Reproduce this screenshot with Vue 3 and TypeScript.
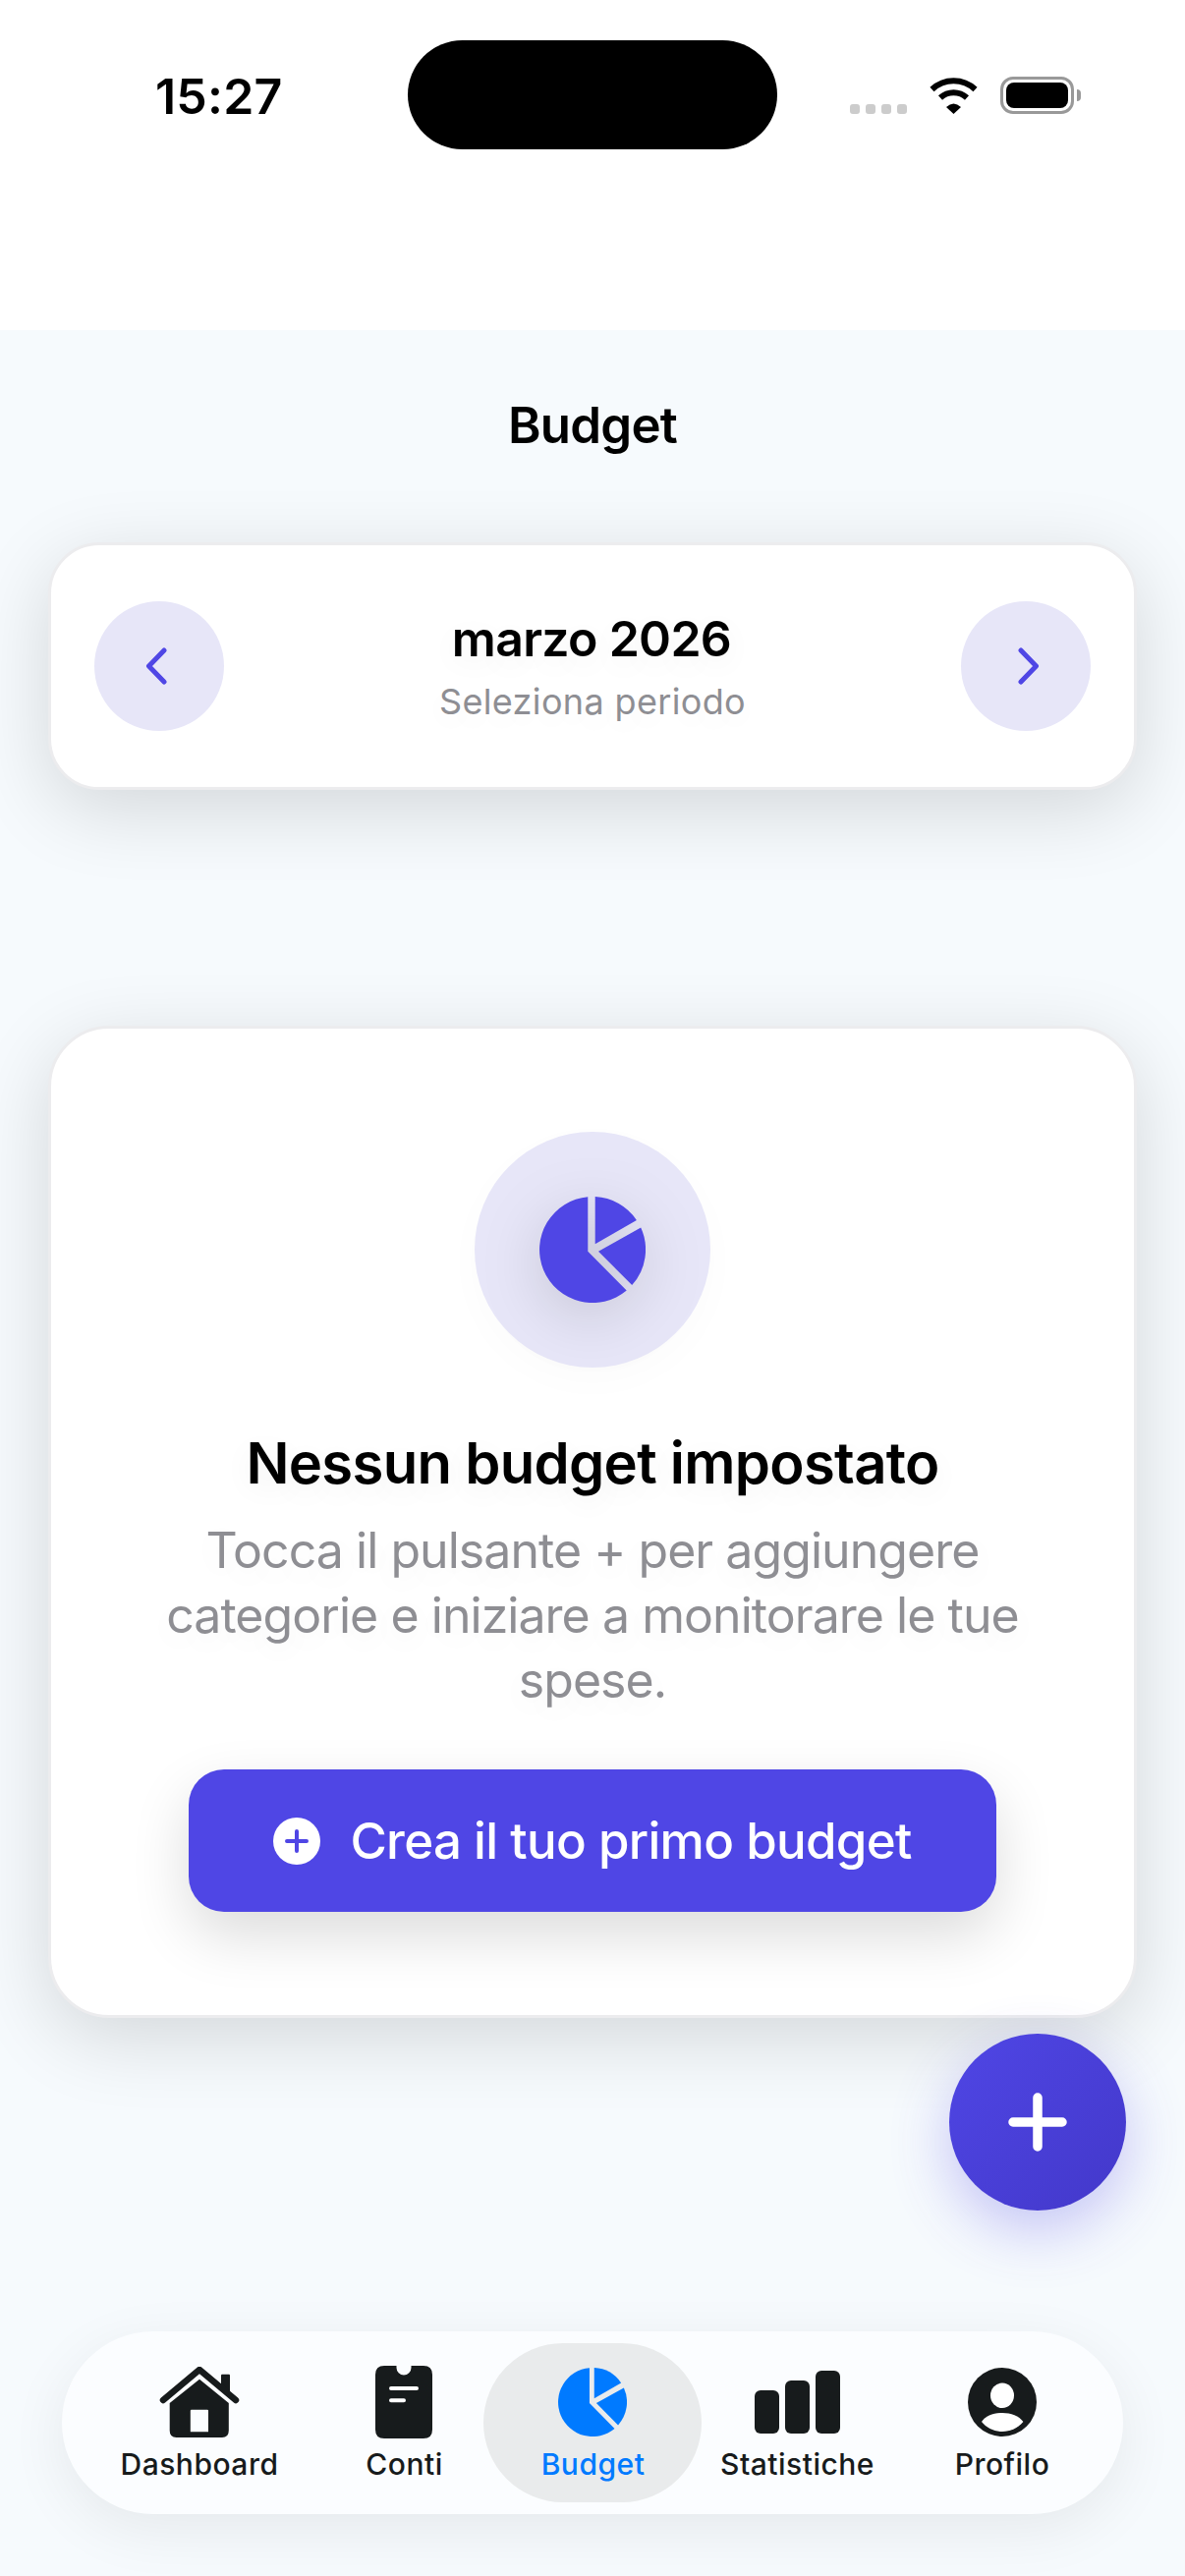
<script setup lang="ts">
const piePaths = [
  'M49.3 .3A54 54 0 1 0 88.7 95.5L49.3 55.7Z',
  'M56.7 .1A54 54 0 0 1 98.9 23.9L56.7 48.3Z',
  'M103.2 31.6A54 54 0 0 1 94.2 90.1L60 55.7Z'
]
</script>

<template>
  <div class="page">
    <header class="status-bar">
      <span class="time">15:27</span>
      <div class="island"></div>
      <div class="status-icons">
        <div class="dots"><i></i><i></i><i></i><i></i></div>
        <svg class="wifi" width="51" height="37" viewBox="0 0 51 37">
          <path d="M3.5 12A32 32 0 0 1 47.5 12" fill="none" stroke="#000" stroke-width="6" />
          <path d="M12 20.5A20 20 0 0 1 39 20.5" fill="none" stroke="#000" stroke-width="6" />
          <path d="M18 30Q25.5 23 33 30L25.5 37Z" fill="#000" />
        </svg>
        <div class="battery"><div class="battery-fill"></div></div>
      </div>
    </header>

    <h1 class="title">Budget</h1>

    <section class="card period-card">
      <button class="nav-btn">
        <svg width="30" height="38" viewBox="0 0 30 38">
          <path d="M20 3L4.5 19L20 35" fill="none" stroke="#4f46e5" stroke-width="5" stroke-linecap="round" stroke-linejoin="round" />
        </svg>
      </button>
      <div class="period">
        <div class="period-month">marzo 2026</div>
        <div class="period-sub">Seleziona periodo</div>
      </div>
      <button class="nav-btn">
        <svg width="30" height="38" viewBox="0 0 30 38">
          <path d="M10 3L25.5 19L10 35" fill="none" stroke="#4f46e5" stroke-width="5" stroke-linecap="round" stroke-linejoin="round" />
        </svg>
      </button>
    </section>

    <section class="card empty-card">
      <div class="empty-icon">
        <svg class="empty-pie" width="108" height="108" viewBox="0 0 108 108">
          <path v-for="d in piePaths" :key="d" :d="d" fill="#4f46e5" />
        </svg>
      </div>
      <h2 class="empty-title">Nessun budget impostato</h2>
      <p class="empty-text">Tocca il pulsante + per aggiungere categorie e iniziare a monitorare le tue spese.</p>
      <button class="create-btn">
        <svg width="48" height="48" viewBox="0 0 48 48">
          <circle cx="24" cy="24" r="24" fill="#fff" />
          <path d="M24 14V34M14 24H34" fill="none" stroke="#4f46e5" stroke-width="4" stroke-linecap="round" />
        </svg>
        <span>Crea il tuo primo budget</span>
      </button>
    </section>

    <button class="fab">
      <svg width="60" height="60" viewBox="0 0 60 60">
        <path d="M30 5V55M5 30H55" fill="none" stroke="#fff" stroke-width="9.5" stroke-linecap="round" />
      </svg>
    </button>

    <nav class="tabbar">
      <div class="tab">
        <div class="tab-icon">
          <svg width="82" height="72" viewBox="0 0 82 72">
            <path d="M63 8.5Q63 7.7 64 7.7H71Q72 7.7 72 8.5V26L63 18Z" fill="#171b1c" />
            <path d="M4 34L41 3L78 34" fill="none" stroke="#171b1c" stroke-width="6.5" stroke-linecap="round" stroke-linejoin="round" />
            <path fill-rule="evenodd" d="M10.7 37L41 12.7L70.8 37V65Q70.8 72 64 72H17.5Q10.7 72 10.7 65ZM31.8 44.7V66.3H50V44.7Q50 43.7 49 43.7H32.8Q31.8 43.7 31.8 44.7Z" fill="#171b1c" />
          </svg>
        </div>
        <span class="tab-label">Dashboard</span>
      </div>
      <div class="tab">
        <div class="tab-icon">
          <svg width="58" height="74" viewBox="0 0 58 74">
            <path fill-rule="evenodd" d="M9 0H21.5V2A7.5 7.5 0 0 0 36.5 2V0H49Q58 0 58 9V65Q58 74 49 74H9Q0 74 0 65V9Q0 0 9 0Z" fill="#171b1c" />
            <path d="M16 23H42M16 35.3H29" fill="none" stroke="#fff" stroke-width="4" stroke-linecap="round" />
          </svg>
        </div>
        <span class="tab-label">Conti</span>
      </div>
      <div class="tab active">
        <div class="tab-icon">
          <svg width="70" height="70" viewBox="0 0 108 108">
            <path v-for="d in piePaths" :key="d" :d="d" fill="#007aff" />
          </svg>
        </div>
        <span class="tab-label">Budget</span>
      </div>
      <div class="tab">
        <div class="tab-icon">
          <svg width="87" height="64" viewBox="0 0 87 64">
            <rect x="0" y="20" width="25" height="44" rx="6" fill="#171b1c" />
            <rect x="31" y="10" width="25" height="54" rx="6" fill="#171b1c" />
            <rect x="62" y="0" width="25" height="64" rx="6" fill="#171b1c" />
          </svg>
        </div>
        <span class="tab-label">Statistiche</span>
      </div>
      <div class="tab">
        <div class="tab-icon">
          <svg width="70" height="70" viewBox="0 0 70 70">
            <circle cx="35" cy="35" r="35" fill="#171b1c" />
            <ellipse cx="35" cy="28.3" rx="12" ry="12.8" fill="#fff" />
            <path d="M14 55C18 49 26 46 35 46C44 46 52 49 56.4 55C51 61.5 43 65 35 65C27 65 19 61.5 14 55Z" fill="#fff" />
          </svg>
        </div>
        <span class="tab-label">Profilo</span>
      </div>
    </nav>
  </div>
</template>

<style scoped>
.page {
  position: relative;
  width: 1206px;
  height: 2622px;
  overflow: hidden;
  background: #f6fafd;
  font-family: Inter, "Noto Sans", sans-serif;
  color: #000;
}

.status-bar {
  display: flex;
  align-items: flex-start;
  height: 336px;
  padding: 71px 113px 0 158px;
  box-sizing: border-box;
  background: #fff;
}

.time {
  font-size: 50px;
  font-weight: 600;
  line-height: 54px;
  letter-spacing: 0.2px;
}

.island {
  position: absolute;
  left: 415px;
  top: 41px;
  width: 376px;
  height: 111px;
  border-radius: 56px;
  background: #000;
}

.status-icons {
  display: flex;
  align-items: flex-start;
  margin-left: auto;
  padding-top: 7px;
}

.dots {
  display: flex;
  gap: 6px;
  margin-top: 28px;
}

.dots i {
  width: 10px;
  height: 10px;
  border-radius: 3px;
  background: #ccc;
}

.wifi {
  margin-left: 22px;
  margin-top: 1px;
}

.battery {
  position: relative;
  width: 75px;
  height: 38px;
  margin-left: 22px;
  padding: 3px;
  box-sizing: border-box;
  border: 3px solid #999;
  border-radius: 13px;
}

.battery::after {
  content: "";
  position: absolute;
  right: -10px;
  top: 10px;
  width: 4px;
  height: 12px;
  border-radius: 0 6px 6px 0;
  background: #999;
}

.battery-fill {
  height: 100%;
  border-radius: 8px;
  background: #000;
}

.title {
  margin: 66px 0 0;
  text-align: center;
  font-size: 51px;
  font-weight: 600;
  line-height: 62px;
  letter-spacing: -0.8px;
}

.card {
  margin-left: 49px;
  margin-right: 49px;
  box-sizing: border-box;
  background: #fff;
  border: 3px solid #ececee;
  box-shadow: 0 20px 80px rgba(0, 0, 0, 0.14);
}

.period-card {
  display: flex;
  align-items: center;
  justify-content: space-between;
  height: 252px;
  margin-top: 88px;
  padding: 0 44px;
  border-radius: 52px;
}

.nav-btn {
  display: flex;
  align-items: center;
  justify-content: center;
  width: 132px;
  height: 132px;
  padding: 0;
  border: 0;
  border-radius: 50%;
  background: #e7e6f8;
}

.period {
  padding-top: 4px;
  text-align: center;
  text-shadow: 0 8px 30px rgba(0, 0, 0, 0.06);
}

.period-month {
  margin-top: -4px;
  margin-left: -2px;
  font-size: 50px;
  font-weight: 600;
  line-height: 62px;
  letter-spacing: -0.7px;
}

.period-sub {
  margin-top: 10px;
  font-size: 36px;
  line-height: 46px;
  letter-spacing: 0.35px;
  color: #8e8e93;
}

.empty-card {
  display: flex;
  flex-direction: column;
  align-items: center;
  height: 1010px;
  margin-top: 240px;
  padding-top: 105px;
  border-radius: 62px;
}

.empty-icon {
  display: flex;
  align-items: center;
  justify-content: center;
  width: 240px;
  height: 240px;
  border-radius: 50%;
  background: #e7e6f8;
  box-shadow: 0 12px 40px rgba(0, 0, 0, 0.02);
}

.empty-pie {
  filter: drop-shadow(0 14px 30px rgba(0, 0, 0, 0.14));
}

.empty-title {
  margin: 62px 0 0;
  font-size: 58px;
  font-weight: 600;
  line-height: 70px;
  letter-spacing: -0.7px;
  text-shadow: 0 8px 30px rgba(0, 0, 0, 0.06);
}

.empty-text {
  width: 900px;
  margin: 21px 0 0;
  text-align: center;
  font-size: 50px;
  line-height: 66px;
  letter-spacing: -0.95px;
  color: #8e8e93;
  text-shadow: 0 8px 30px rgba(0, 0, 0, 0.06);
}

.create-btn {
  display: flex;
  align-items: center;
  justify-content: center;
  gap: 30px;
  width: 822px;
  height: 145px;
  margin-top: 58px;
  padding: 0;
  border: 0;
  border-radius: 36px;
  background: #4f46e5;
  box-shadow: 0 24px 60px rgba(0, 0, 0, 0.14);
  font-family: inherit;
  font-size: 51px;
  font-weight: 550;
  letter-spacing: -0.7px;
  color: #fff;
}

.create-btn svg {
  flex: none;
}

.fab {
  position: absolute;
  left: 966px;
  top: 2070px;
  display: flex;
  align-items: center;
  justify-content: center;
  width: 180px;
  height: 180px;
  padding: 0;
  border: 0;
  border-radius: 50%;
  background: linear-gradient(135deg, #4f46e5, #4338ca);
  box-shadow: 0 20px 60px rgba(79, 70, 229, 0.3);
}

.tabbar {
  position: absolute;
  left: 63px;
  top: 2373px;
  display: grid;
  grid-template-columns: 255px 162px 222px 194px 223px;
  width: 1080px;
  height: 186px;
  padding: 12px;
  box-sizing: border-box;
  border-radius: 93px;
  background: #fbfdff;
  box-shadow: 0 16px 60px rgba(0, 0, 0, 0.07);
}

.tab {
  display: flex;
  flex-direction: column;
  align-items: center;
  height: 162px;
  padding-top: 23px;
  box-sizing: border-box;
  border-radius: 81px;
  color: #171b1c;
}

.tab.active {
  background: #e9ebec;
  color: #007aff;
}

.tab-icon {
  display: flex;
  align-items: center;
  justify-content: center;
  height: 74px;
}

.tab-label {
  margin-top: 8px;
  padding-left: 1px;
  font-size: 30px;
  font-weight: 450;
  line-height: 36px;
  letter-spacing: 0.5px;
}
</style>

<style>
html,
body {
  margin: 0;
  background: #f6fafd;
}
</style>
